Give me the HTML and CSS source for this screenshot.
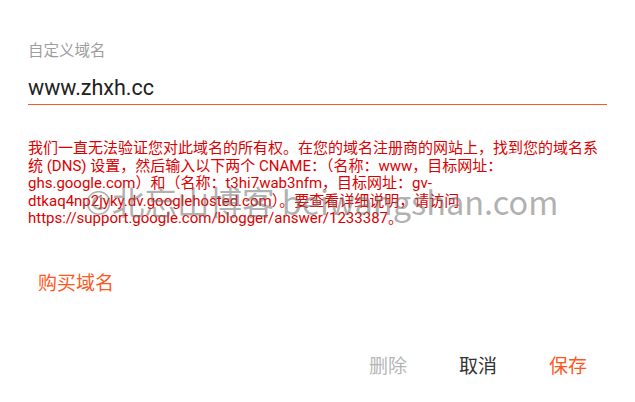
FILE: index.html
```html
<!DOCTYPE html>
<html lang="zh">
<head>
<meta charset="utf-8">
<link rel="stylesheet" href="styles.css">
</head>
<body>
<div class="dialog">
  <div class="field">
    <div class="label">自定义域名</div>
    <div class="input">www.zhxh.cc</div>
  </div>
  <p class="error">我们一直无法验证您对此域名的所有权。在您的域名注册商的网站上，找到您的域名系统 (DNS) 设置，然后输入以下两个 CNAME：（名称：www，目标网址：ghs.google.com）和（名称：t3hi7wab3nfm，目标网址：gv-dtkaq4np2jyky.dv.googlehosted.com）。要查看详细说明，请访问 https://support.google.com/blogger/answer/1233387。</p>
  <div class="buy">购买域名</div>
  <div class="actions">
    <span class="btn btn-delete">删除</span>
    <span class="btn btn-cancel">取消</span>
    <span class="btn btn-save">保存</span>
  </div>
  <div class="watermark">©北忘山博客 beiwangshan.com</div>
</div>
</body>
</html>
```
FILE: styles.css
```css
html, body {
  margin: 0;
  padding: 0;
  background: #fff;
}
body {
  font-family: Roboto, "Noto Sans CJK SC", sans-serif;
  width: 635px;
  height: 402px;
  overflow: hidden;
}
.dialog {
  position: relative;
  padding: 41px 28px 0 28px;
  width: 579px;
}
.label {
  font-size: 15.5px;
  line-height: 20px;
  color: #9e9e9e;
}
.input {
  margin-top: 14px;
  font-size: 21.5px;
  line-height: 26px;
  color: #212121;
  padding-bottom: 3px;
  border-bottom: 1px solid #ff5722;
}
.error {
  margin: 35px 0 0 0;
  font-size: 15px;
  line-height: 17.5px;
  color: #dd0000;
}
.buy {
  margin-top: 43px;
  margin-left: 10px;
  font-size: 19px;
  line-height: 26px;
  color: #ff5722;
}
.actions {
  display: flex;
  justify-content: flex-end;
  gap: 52px;
  margin-top: 57px;
  padding-right: 20px;
}
.btn {
  font-size: 19px;
  line-height: 26px;
}
.btn-delete { color: #b5b5b5; }
.btn-cancel { color: #333; }
.btn-save { color: #ff5722; }
.watermark {
  position: absolute;
  left: 85px;
  top: 181px;
  font-family: "Noto Sans CJK SC", sans-serif;
  font-size: 32.5px;
  line-height: 40px;
  color: rgba(110, 110, 110, 0.55);
  white-space: nowrap;
  pointer-events: none;
}
```
